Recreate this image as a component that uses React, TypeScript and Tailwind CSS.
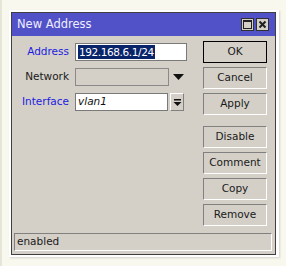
import React from 'react';

const font = { fontFamily: '"DejaVu Sans", Verdana, sans-serif' };

const Btn = ({ label, primary }: { label: string; primary?: boolean }) => (
  <button
    className={
      primary
        ? 'h-[22px] w-[64px] border border-black bg-[#d4d0c8] text-[10.5px] text-[#1a1a1a]'
        : 'h-[22px] w-[64px] border border-t-[#808080] border-l-[#808080] border-b-white border-r-white bg-[#d4d0c8] text-[10.5px] text-[#1a1a1a]'
    }
  >
    {label}
  </button>
);

export default function App() {
  return (
    <div className="w-[286px] h-[266px] bg-[#f8f8ef] border-l-2 border-[#e6e6d8] pl-[7px] pt-[10px]" style={font}>
      <div className="w-[270px] h-[247px] bg-white p-[2px] shadow-[1px_1px_2px_rgba(0,0,0,0.15)]">
        <div className="w-[265px] h-[243px] border border-[#404040] flex flex-col">
          {/* title */}
          <div className="h-[23px] bg-[#5252c8] flex items-center justify-between pl-[5px] pr-[6px]">
            <span className="text-[11.5px] text-[#eeeeff] pt-[1px]">New Address</span>
            <div className="flex gap-[2px]">
              <div className="w-[13px] h-[13px] bg-[#d4d0c8] border border-[#303030] flex items-center justify-center">
                <div className="w-[9px] h-[9px] border-[1.5px] border-[#202020] border-t-2" />
              </div>
              <div className="w-[13px] h-[13px] bg-[#d4d0c8] border border-[#303030] flex items-center justify-center">
                <svg width="9" height="9" viewBox="0 0 9 9">
                  <path d="M1.5 1.5L7.5 7.5M7.5 1.5L1.5 7.5" stroke="#202020" strokeWidth="2" />
                </svg>
              </div>
            </div>
          </div>

          {/* body */}
          <div className="flex-1 bg-[#d4d0c8] flex flex-col pt-[5px] pb-[3px] pl-[2px] pr-[3px]">
            <div className="flex items-start justify-between pr-[5px]">
              <div className="grid grid-cols-[55px_auto] gap-x-[6px] gap-y-[7px] items-center pt-[2px]">
                <span className="text-right text-[10.5px] text-[#1c1ce0]">Address</span>
                <div className="w-[112px] h-[18px] bg-white border border-[#7a7a7a] flex items-center px-[2px]">
                  <span className="bg-[#0a246a] text-white text-[10.5px] leading-[14px] px-[1px] tracking-[-0.4px]">192.168.6.1/24</span>
                </div>

                <span className="text-right text-[10.5px] text-[#1a1a1a]">Network</span>
                <div className="flex items-center">
                  <div className="w-[94px] h-[18px] bg-[#d4d0c8] border border-[#8a8a8a]" />
                  <svg className="ml-[4px]" width="11" height="7" viewBox="0 0 11 7">
                    <path d="M0 0H11L5.5 6Z" fill="#111" />
                  </svg>
                </div>

                <span className="text-right text-[10.5px] text-[#1c1ce0]">Interface</span>
                <div className="flex items-center">
                  <div className="w-[93px] h-[18px] bg-white border border-[#7a7a7a] flex items-center px-[2px]">
                    <span className="italic text-[10.5px] text-[#111]">vlan1</span>
                  </div>
                  <div className="ml-[2px] w-[14px] h-[18px] border border-t-white border-l-white border-b-[#808080] border-r-[#808080] bg-[#d4d0c8] flex items-center justify-center">
                    <svg width="9" height="9" viewBox="0 0 9 9">
                      <rect x="1" y="1" width="7" height="1.5" fill="#111" />
                      <path d="M0.5 4H8.5L4.5 8Z" fill="#111" />
                    </svg>
                  </div>
                </div>
              </div>

              <div className="flex flex-col gap-[4px]">
                <Btn label="OK" primary />
                <Btn label="Cancel" />
                <Btn label="Apply" />
                <div className="h-[3px]" />
                <Btn label="Disable" />
                <Btn label="Comment" />
                <Btn label="Copy" />
                <Btn label="Remove" />
              </div>
            </div>

            <div className="mt-auto h-[18px] border border-t-[#808080] border-l-[#808080] border-b-white border-r-white flex items-center px-[2px]">
              <span className="text-[10.5px] text-[#1a1a1a]">enabled</span>
            </div>
          </div>
        </div>
      </div>
    </div>
  );
}
